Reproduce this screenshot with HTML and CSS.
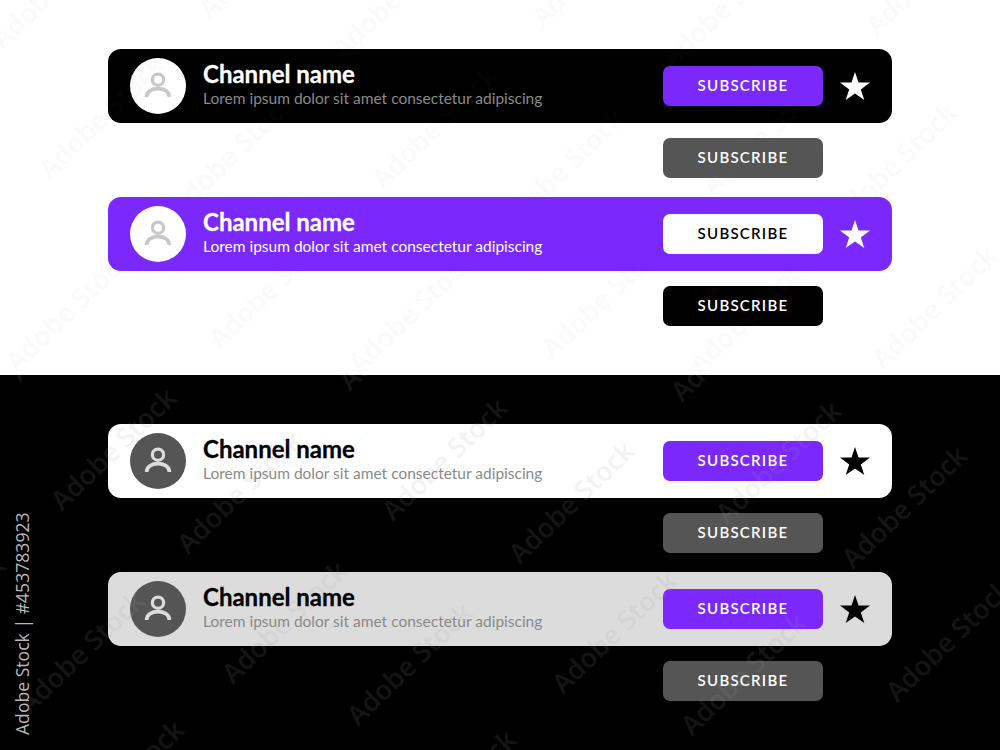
FILE: index.html
```html
<!DOCTYPE html>
<html lang="en">
<head>
    <meta charset="UTF-8">
    <title>Channel subscribe bars</title>
    <link rel="stylesheet" href="styles.css">
</head>
<body>
    <svg width="0" height="0" class="defs">
        <symbol id="user" viewBox="0 0 56 56">
            <circle cx="28" cy="21.7" r="5.6" fill="none" stroke="currentColor" stroke-width="3.2"/>
            <path d="M16.6 39C16.6 33.5 22 30.6 28 30.6S39.4 33.5 39.4 39" fill="none" stroke="currentColor" stroke-width="3.6"/>
        </symbol>
        <symbol id="star" viewBox="0 0 30 28">
            <polygon points="15,0 18.5,10.6 30,10.6 20.8,17.4 24.3,28 15,21.5 5.7,28 9.2,17.4 0,10.6 11.5,10.6" fill="currentColor"/>
        </symbol>
    </svg>

    <div class="half light">
        <div class="bar bar-black">
            <div class="avatar avatar-white"><svg class="user"><use href="#user"/></svg></div>
            <div class="info">
                <div class="name">Channel name</div>
                <div class="desc">Lorem ipsum dolor sit amet consectetur adipiscing</div>
            </div>
            <div class="btn btn-purple">SUBSCRIBE</div>
            <svg class="star"><use href="#star"/></svg>
        </div>
        <div class="btn-row"><div class="btn btn-gray">SUBSCRIBE</div></div>

        <div class="bar bar-purple">
            <div class="avatar avatar-white"><svg class="user"><use href="#user"/></svg></div>
            <div class="info">
                <div class="name">Channel name</div>
                <div class="desc">Lorem ipsum dolor sit amet consectetur adipiscing</div>
            </div>
            <div class="btn btn-white">SUBSCRIBE</div>
            <svg class="star"><use href="#star"/></svg>
        </div>
        <div class="btn-row"><div class="btn btn-black">SUBSCRIBE</div></div>
    </div>

    <div class="half dark">
        <div class="bar bar-white">
            <div class="avatar avatar-gray"><svg class="user"><use href="#user"/></svg></div>
            <div class="info">
                <div class="name">Channel name</div>
                <div class="desc">Lorem ipsum dolor sit amet consectetur adipiscing</div>
            </div>
            <div class="btn btn-purple">SUBSCRIBE</div>
            <svg class="star"><use href="#star"/></svg>
        </div>
        <div class="btn-row"><div class="btn btn-gray">SUBSCRIBE</div></div>

        <div class="bar bar-silver">
            <div class="avatar avatar-gray"><svg class="user"><use href="#user"/></svg></div>
            <div class="info">
                <div class="name">Channel name</div>
                <div class="desc">Lorem ipsum dolor sit amet consectetur adipiscing</div>
            </div>
            <div class="btn btn-purple">SUBSCRIBE</div>
            <svg class="star"><use href="#star"/></svg>
        </div>
        <div class="btn-row"><div class="btn btn-gray">SUBSCRIBE</div></div>
    </div>

    <!-- stock photo watermarks sit over everything -->
    <svg class="marks" width="1000" height="750" viewBox="0 0 1000 750">
        <defs>
            <clipPath id="clip-top"><rect x="0" y="0" width="1000" height="375"/></clipPath>
            <clipPath id="clip-bottom"><rect x="0" y="375" width="1000" height="375"/></clipPath>
        </defs>
        <g class="marks-top" clip-path="url(#clip-top)">
            <text transform="translate(3 50) rotate(-44)">Adobe Stock</text>
            <text transform="translate(210 20) rotate(-44)">Adobe Stock</text>
            <text transform="translate(343 60) rotate(-44)">Adobe Stock</text>
            <text transform="translate(543 28) rotate(-44)">Adobe Stock</text>
            <text transform="translate(673 70) rotate(-44)">Adobe Stock</text>
            <text transform="translate(877 37) rotate(-44)">Adobe Stock</text>
            <text transform="translate(50 180) rotate(-44)">Adobe Stock</text>
            <text transform="translate(180 217) rotate(-44)">Adobe Stock</text>
            <text transform="translate(383 190) rotate(-44)">Adobe Stock</text>
            <text transform="translate(510 233) rotate(-44)">Adobe Stock</text>
            <text transform="translate(713 197) rotate(-44)">Adobe Stock</text>
            <text transform="translate(843 227) rotate(-44)">Adobe Stock</text>
            <text transform="translate(17 373) rotate(-44)">Adobe Stock</text>
            <text transform="translate(220 350) rotate(-44)">Adobe Stock</text>
            <text transform="translate(360 375) rotate(-44)">Adobe Stock</text>
            <text transform="translate(553 360) rotate(-44)">Adobe Stock</text>
            <text transform="translate(700 375) rotate(-44)">Adobe Stock</text>
            <text transform="translate(883 370) rotate(-44)">Adobe Stock</text>
        </g>
        <g class="marks-bottom" clip-path="url(#clip-bottom)">
            <text transform="translate(20 382) rotate(-44)">Adobe Stock</text>
            <text transform="translate(350 392) rotate(-44)">Adobe Stock</text>
            <text transform="translate(682 403) rotate(-44)">Adobe Stock</text>
            <text transform="translate(62 512) rotate(-44)">Adobe Stock</text>
            <text transform="translate(188 555) rotate(-44)">Adobe Stock</text>
            <text transform="translate(393 522) rotate(-44)">Adobe Stock</text>
            <text transform="translate(520 565) rotate(-44)">Adobe Stock</text>
            <text transform="translate(727 525) rotate(-44)">Adobe Stock</text>
            <text transform="translate(853 570) rotate(-44)">Adobe Stock</text>
            <text transform="translate(-108 680) rotate(-44)">Adobe Stock</text>
            <text transform="translate(30 715) rotate(-44)">Adobe Stock</text>
            <text transform="translate(233 685) rotate(-44)">Adobe Stock</text>
            <text transform="translate(358 727) rotate(-44)">Adobe Stock</text>
            <text transform="translate(563 695) rotate(-44)">Adobe Stock</text>
            <text transform="translate(692 737) rotate(-44)">Adobe Stock</text>
            <text transform="translate(897 703) rotate(-44)">Adobe Stock</text>
            <text transform="translate(70 844) rotate(-44)">Adobe Stock</text>
            <text transform="translate(402 854) rotate(-44)">Adobe Stock</text>
        </g>
        <text class="stock-id" transform="translate(29 735) rotate(-90)">Adobe Stock | #453783923</text>
    </svg>
</body>
</html>
```

FILE: styles.css
```css
html, body {
    margin: 0;
    padding: 0;
}

body {
    position: relative;
    width: 1000px;
    height: 750px;
    overflow: hidden;
    font-family: Lato, "Liberation Sans", sans-serif;
}

.defs {
    position: absolute;
}

.half {
    height: 375px;
    box-sizing: border-box;
    padding: 49px 108px 0;
}

.light {
    background-color: #ffffff;
}

.dark {
    background-color: #000000;
}

.bar {
    display: flex;
    align-items: center;
    height: 74px;
    padding: 0 22px;
    border-radius: 13px;
}

.bar-black {
    background-color: #000000;
    color: #ffffff;
}

.bar-purple {
    background-color: #7a28fb;
    color: #ffffff;
}

.bar-white {
    background-color: #ffffff;
    color: #000000;
}

.bar-silver {
    background-color: #dcdcdc;
    color: #000000;
}

.avatar {
    width: 56px;
    height: 56px;
    border-radius: 50%;
    flex-shrink: 0;
}

.avatar-white {
    background-color: #ffffff;
    color: #c8c8c8;
}

.avatar-gray {
    background-color: #555555;
    color: #dcdcdc;
}

.user {
    display: block;
    width: 56px;
    height: 56px;
}

.info {
    margin-left: 17px;
    margin-bottom: 5px;
    flex: 1;
}

.name {
    font-size: 24px;
    font-weight: 700;
    line-height: 29px;
    -webkit-text-stroke: 0.3px currentColor;
}

.desc {
    font-size: 15.5px;
    line-height: 20px;
    color: #8a8a8a;
}

.bar-purple .desc {
    color: #ffffff;
}

.btn {
    width: 160px;
    height: 40px;
    padding-bottom: 2px;
    box-sizing: border-box;
    border-radius: 7px;
    display: flex;
    align-items: center;
    justify-content: center;
    font-size: 15px;
    font-weight: 600;
    letter-spacing: 1.25px;
    flex-shrink: 0;
}

.btn-purple {
    background-color: #7a28fb;
    color: #ffffff;
}

.btn-gray {
    background-color: #555555;
    color: #ffffff;
}

.btn-white {
    background-color: #ffffff;
    color: #000000;
}

.btn-black {
    background-color: #000000;
    color: #ffffff;
}

.btn-row {
    display: flex;
    justify-content: flex-end;
    padding: 15px 69px 19px 0;
}

.star {
    width: 30px;
    height: 28px;
    margin-left: 17px;
    flex-shrink: 0;
}

.marks {
    position: absolute;
    top: 0;
    left: 0;
    pointer-events: none;
}

.marks text {
    font-family: "Open Sans", sans-serif;
    font-size: 27px;
    font-weight: 600;
}

.marks-top text {
    fill: rgba(120, 120, 120, 0.05);
}

.marks-bottom text {
    fill: rgba(160, 160, 160, 0.14);
}

.marks .stock-id {
    font-size: 17.6px;
    font-weight: 400;
    fill: #b8b8b8;
}
```
